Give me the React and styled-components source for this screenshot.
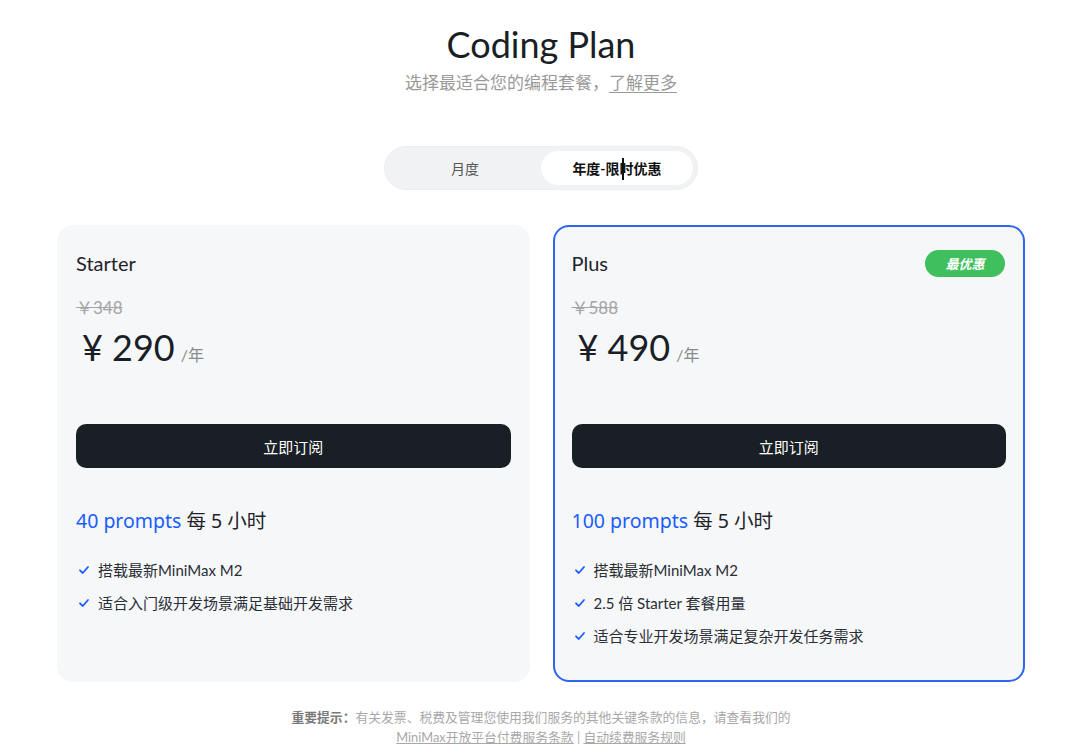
import React, { useState } from "react";
import styled, { createGlobalStyle } from "styled-components";

const GlobalStyle = createGlobalStyle`
  html, body {
    margin: 0;
    padding: 0;
    background: #ffffff;
  }
  body {
    font-family: "Lato", "Noto Sans CJK SC", sans-serif;
    color: #1f2329;
  }
`;

const Page = styled.div`
  width: 1082px;
  display: flex;
  flex-direction: column;
  align-items: center;
  padding-top: 22px;
`;

const Title = styled.h1`
  margin: 0;
  font-size: 36px;
  line-height: 44px;
  font-weight: 400;
  color: #1a1f26;
`;

const Subtitle = styled.p`
  margin: 5px 0 0;
  font-size: 17px;
  line-height: 24px;
  color: #9a9a9a;
  a {
    color: #9a9a9a;
    text-decoration: underline;
    text-underline-offset: 3px;
  }
`;

const Toggle = styled.div`
  margin-top: 51px;
  width: 314px;
  height: 44px;
  box-sizing: border-box;
  padding: 4px;
  border-radius: 22px;
  background: #f1f2f4;
  border: 1px solid #eceef1;
  display: grid;
  grid-template-columns: 1fr 152px;
  position: relative;
`;

const ToggleItem = styled.button`
  border: none;
  border-radius: 18px;
  font-family: inherit;
  font-size: 14px;
  cursor: pointer;
  background: ${(p) => (p.$active ? "#ffffff" : "transparent")};
  color: ${(p) => (p.$active ? "#111" : "#555")};
  font-weight: ${(p) => (p.$active ? 700 : 400)};
  padding: 0;
`;

const Caret = styled.span`
  position: absolute;
  left: 237px;
  top: 11px;
  width: 2px;
  height: 22px;
  background: #111;
`;

const Cards = styled.div`
  margin-top: 35px;
  width: 968px;
  display: grid;
  grid-template-columns: 1fr 1fr;
  gap: 23px;
`;

const Card = styled.div`
  height: 457px;
  box-sizing: border-box;
  border-radius: 16px;
  background: #f6f7f9;
  border: 2px solid ${(p) => (p.$highlight ? "#2f66ef" : "transparent")};
  padding: 22px 17px 0;
  display: flex;
  flex-direction: column;
`;

const CardHead = styled.div`
  height: 28px;
  display: flex;
  align-items: center;
  justify-content: space-between;
`;

const PlanName = styled.div`
  font-size: 20px;
  color: #1f2329;
`;

const Badge = styled.span`
  height: 27px;
  width: 80px;
  margin-right: 1px;
  border-radius: 14px;
  background: #3fbf5e;
  color: #fff;
  font-size: 13px;
  font-weight: 700;
  font-style: italic;
  display: flex;
  align-items: center;
  justify-content: center;
`;

const OldPrice = styled.div`
  margin-top: 19px;
  font-size: 17px;
  line-height: 24px;
  color: #a5a5a5;
  text-decoration: line-through;
`;

const PriceRow = styled.div`
  margin-top: 5px;
  height: 44px;
  display: flex;
  align-items: baseline;
  padding-left: 6px;
`;

const Price = styled.span`
  font-size: 36px;
  line-height: 44px;
  color: #1a1f26;
`;

const Unit = styled.span`
  margin-left: 6px;
  font-size: 16px;
  color: #8a8a8a;
`;

const Subscribe = styled.button`
  margin-top: 55px;
  height: 44px;
  border: none;
  border-radius: 10px;
  background: #1a1f26;
  color: #fff;
  font-family: inherit;
  font-size: 15px;
  font-weight: 400;
  cursor: pointer;
`;

const Quota = styled.div`
  margin-top: 39px;
  font-size: 19.5px;
  line-height: 28px;
  color: #1f2329;
  font-family: "Noto Sans", "Noto Sans CJK SC", sans-serif;
  strong {
    font-weight: 400;
    color: #1a5cff;
  }
`;

const Features = styled.ul`
  list-style: none;
  margin: 24px 0 0;
  padding: 0 0 0 2px;
  display: flex;
  flex-direction: column;
  gap: 11px;
`;

const Feature = styled.li`
  display: flex;
  align-items: center;
  gap: 8px;
  font-size: 15px;
  line-height: 22px;
  color: #2a2e35;
`;

const Footer = styled.div`
  margin-top: 25px;
  text-align: center;
  font-size: 12.8px;
  line-height: 20px;
  color: #a8a8a8;
  b {
    color: #7a7a7a;
  }
  a {
    color: #a8a8a8;
    text-decoration: underline;
  }
`;

const Check = () => (
  <svg width="12" height="12" viewBox="0 0 12 12" fill="none">
    <path d="M2 6.3 L4.8 9 L10 3" stroke="#1a5cff" strokeWidth="1.8" strokeLinecap="round" strokeLinejoin="round" />
  </svg>
);

const plans = [
  {
    name: "Starter",
    old: "￥348",
    price: "¥ 290",
    prompts: "40 prompts",
    features: ["搭载最新MiniMax M2", "适合入门级开发场景满足基础开发需求"],
  },
  {
    name: "Plus",
    badge: "最优惠",
    highlight: true,
    old: "￥588",
    price: "¥ 490",
    prompts: "100 prompts",
    features: ["搭载最新MiniMax M2", "2.5 倍 Starter 套餐用量", "适合专业开发场景满足复杂开发任务需求"],
  },
];

export default function App() {
  const [period, setPeriod] = useState("year");
  return (
    <Page>
      <GlobalStyle />
      <Title>Coding Plan</Title>
      <Subtitle>
        选择最适合您的编程套餐，<a href="#">了解更多</a>
      </Subtitle>
      <Toggle>
        <ToggleItem $active={period === "month"} onClick={() => setPeriod("month")}>月度</ToggleItem>
        <ToggleItem $active={period === "year"} onClick={() => setPeriod("year")}>年度-限时优惠</ToggleItem>
        <Caret />
      </Toggle>
      <Cards>
        {plans.map((p) => (
          <Card key={p.name} $highlight={p.highlight}>
            <CardHead>
              <PlanName>{p.name}</PlanName>
              {p.badge && <Badge>{p.badge}</Badge>}
            </CardHead>
            <OldPrice>{p.old}</OldPrice>
            <PriceRow>
              <Price>{p.price}</Price>
              <Unit>/年</Unit>
            </PriceRow>
            <Subscribe>立即订阅</Subscribe>
            <Quota>
              <strong>{p.prompts}</strong> 每 5 小时
            </Quota>
            <Features>
              {p.features.map((f) => (
                <Feature key={f}>
                  <Check />
                  {f}
                </Feature>
              ))}
            </Features>
          </Card>
        ))}
      </Cards>
      <Footer>
        <b>重要提示：</b>有关发票、税费及管理您使用我们服务的其他关键条款的信息，请查看我们的
        <br />
        <a href="#">MiniMax开放平台付费服务条款</a> | <a href="#">自动续费服务规则</a>
      </Footer>
    </Page>
  );
}
